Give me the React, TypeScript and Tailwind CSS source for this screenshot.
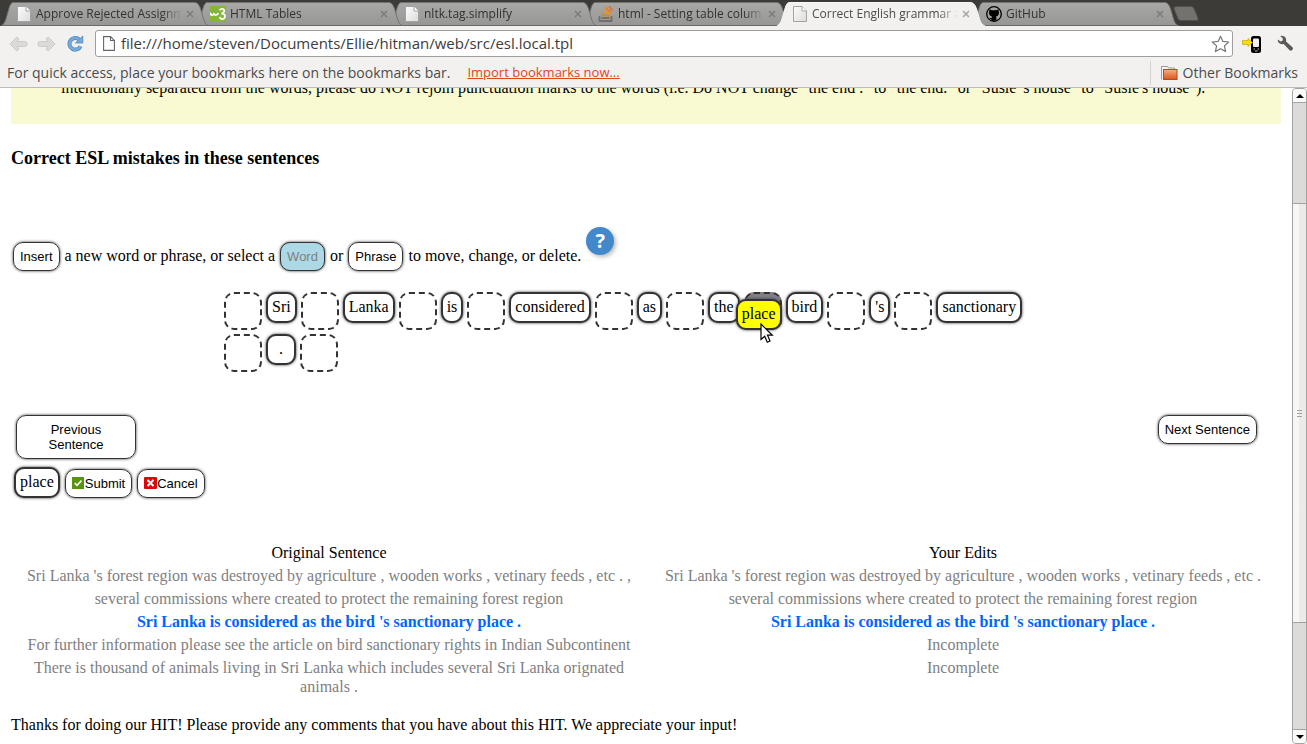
import React from "react";

const chromeFont = "font-['Open_Sans','Noto_Sans',sans-serif]";
const serif = "font-['Liberation_Serif',serif]";

function PageIcon() {
  return (
    <svg width="14" height="16" viewBox="0 0 14 16" className="shrink-0">
      <defs>
        <linearGradient id="paper" x1="0" y1="0" x2="1" y2="1">
          <stop offset="0" stopColor="#fdfdfd" />
          <stop offset="1" stopColor="#dcdcdc" />
        </linearGradient>
      </defs>
      <path d="M.5.5H9L13.500 5V15.500H.5Z" fill="url(#paper)" stroke="#a3a3a1" />
      <path d="M9 .5V5H13.500" fill="#fff" stroke="#a3a3a1" />
    </svg>
  );
}

function OmniboxPageIcon() {
  return (
    <svg width="12" height="15" viewBox="0 0 12 15" className="shrink-0">
      <path d="M.6.6H7.500L11.400 4.500V14.400H.6Z" fill="#fff" stroke="#666" strokeWidth="1.100" />
      <path d="M7.500.6V4.500H11.400" fill="none" stroke="#666" strokeWidth="1.100" />
    </svg>
  );
}

function W3Icon() {
  return (
    <svg width="16" height="16" viewBox="0 0 16 16" className="shrink-0">
      <rect width="16" height="16" fill="#86b53b" />
      <path d="M0 6.500Q.8 9.300 2.500 9Q4 8.800 4 7Q4.200 9.300 6 9Q7.800 8.800 8.200 7" fill="none" stroke="#fff" strokeWidth="1.700" />
      <path d="M9.500 4.200Q11 2.500 13 3Q15 4 13.800 6Q13 7.200 11.500 7.500Q15 7.600 15 10.300Q14.500 13.500 11.500 13Q10 12.500 9.700 11" fill="none" stroke="#fff" strokeWidth="1.800" />
    </svg>
  );
}

function StackIcon() {
  return (
    <svg width="16" height="16" viewBox="0 0 16 16" className="shrink-0" fill="none">
      <path d="M1.500 10V15H13.500V10" stroke="#6f6f6d" strokeWidth="1.800" />
      <path d="M3.500 12H11.500" stroke="#7a6a52" strokeWidth="1.800" />
      <path d="M3.700 8.600L11.500 10.200" stroke="#c98a2d" strokeWidth="1.800" />
      <path d="M4.800 4.800L12 8.300" stroke="#ee9418" strokeWidth="1.800" />
      <path d="M7.300 1.500L13 6.500" stroke="#ef7f1f" strokeWidth="1.800" />
      <path d="M11 0L14.300 4.500" stroke="#e9692c" strokeWidth="1.600" />
    </svg>
  );
}

function GitHubIcon() {
  return (
    <svg width="16" height="16" viewBox="0 0 16 16" className="shrink-0">
      <circle cx="8" cy="8" r="7.300" fill="#a3a3a1" stroke="#000" strokeWidth="1.300" />
      <path d="M3.500 3.200L5.800 4.200H10.200L12.500 3.200L12.900 5.700Q13.400 9.800 10 10.600Q10.500 11.200 10.500 14.800H5.600V13.500Q3.800 13.500 3 11.500Q4.500 12.500 5.700 12Q5.700 11 6 10.600Q2.600 9.800 3.100 5.700Z" fill="#000" />
    </svg>
  );
}

type TabInfo = { title: string; icon: React.ReactNode; active?: boolean; layer: string };

const tabs: TabInfo[] = [
  { title: "Approve Rejected Assignm", icon: <PageIcon />, layer: "z-[5]" },
  { title: "HTML Tables", icon: <W3Icon />, layer: "z-[4]" },
  { title: "nltk.tag.simplify", icon: <PageIcon />, layer: "z-[3]" },
  { title: "html - Setting table colum", icon: <StackIcon />, layer: "z-[2]" },
  { title: "Correct English grammar a", icon: <PageIcon />, active: true, layer: "z-[6]" },
  { title: "GitHub", icon: <GitHubIcon />, layer: "z-[1]" },
];

function Tab({ title, icon, active, layer }: TabInfo) {
  return (
    <div className={`relative flex h-6 min-w-0 basis-[194px] items-center pl-[13px] ${layer}`}>
      <svg
        viewBox="0 0 208 24"
        preserveAspectRatio="none"
        className="pointer-events-none absolute -left-[2px] top-0 h-6 w-[208px]"
        aria-hidden="true"
      >
        <defs>
          <linearGradient id="tabfill" x1="0" y1="0" x2="0" y2="1">
            <stop offset="0" stopColor="#a8a8a6" />
            <stop offset="1" stopColor="#969694" />
          </linearGradient>
        </defs>
        <path
          d="M0 24C4 22 5 17 7 10C9 3 9.500.5 13 .5H193C197 .5 198.500 3 200.500 10C203 18 203 22 208 24Z"
          fill={active ? "#f2f1f0" : "url(#tabfill)"}
        />
        <path
          d="M0 24C4 22 5 17 7 10C9 3 9.500.5 13 .5H193C197 .5 198.500 3 200.500 10C203 18 203 22 208 24"
          fill="none"
          stroke={active ? "#f8f8f7" : "#72726f"}
        />
        {!active && <path d="M0 23.500H208" stroke="#6b6b68" />}
      </svg>
      <button className="relative flex min-w-0 flex-1 items-center gap-1 text-left">
        <span className="flex w-4 shrink-0 justify-center">{icon}</span>
        <span
          className={`block flex-1 overflow-hidden whitespace-nowrap text-[12px] leading-[18px] ${
            active ? "text-[#4c4c4c]" : "text-[#33322e]"
          } [mask-image:linear-gradient(to_right,#000_calc(100%-20px),transparent)]`}
        >
          {title}
        </span>
      </button>
      <button aria-label="Close tab" className="relative ml-[4px] mr-[3px] shrink-0">
        <svg width="8" height="8" viewBox="0 0 8 8">
          <path d="M1 1L7 7M7 1L1 7" stroke={active ? "#a5a5a3" : "#7c7c7a"} strokeWidth="1.500" />
        </svg>
      </button>
    </div>
  );
}

function ArrowIcon({ flip }: { flip?: boolean }) {
  return (
    <svg width="19" height="16" viewBox="0 0 19 16" className={flip ? "-scale-x-100" : ""}>
      <path
        d="M8 1L1 8L8 15L10 13L8 10.500H16.500Q18 10.500 18 8Q18 5.500 16.500 5.500H8L10 3Z"
        fill="#dbdad9"
        stroke="#cccbca"
        strokeLinejoin="round"
      />
    </svg>
  );
}

function ReloadIcon() {
  return (
    <svg width="17" height="17" viewBox="0 0 17 17">
      <path d="M13.500 11.300A5.800 5.800 0 1 1 12.200 4.500" fill="none" stroke="#5087bd" strokeWidth="4" />
      <path d="M13.500 11.300A5.800 5.800 0 1 1 12.200 4.500" fill="none" stroke="#76a9dc" strokeWidth="2.600" />
      <path d="M15.800 1V8H8.500Z" fill="#76a9dc" stroke="#5087bd" strokeWidth=".8" />
    </svg>
  );
}

function TopBar() {
  return (
    <header className={`shrink-0 border-b border-[#bcbbbb] bg-[#f2f1f0] ${chromeFont}`}>
      <div className="flex h-[26px] items-start bg-[#3c3b37] pl-[3px] pt-[2px]">
        {tabs.map((t) => (
          <Tab key={t.title} {...t} />
        ))}
        <button aria-label="New tab" className="ml-[6px] mt-[4px]">
          <svg width="26" height="15" viewBox="0 0 26 15">
            <path d="M3 .5H18Q20 .5 21 2.500L25 12Q25.500 14.500 24 14.500H8Q6 14.500 5 12.500L1 3Q.5.5 3 .5Z" fill="#73726f" stroke="#52514d" />
          </svg>
        </button>
      </div>

      <div className="flex h-[35px] items-center pl-[9px] pr-[13px]">
        <button aria-label="Back"><ArrowIcon /></button>
        <button aria-label="Forward" className="ml-[9px]"><ArrowIcon flip /></button>
        <button aria-label="Reload" className="ml-[11px]"><ReloadIcon /></button>
        <div className="ml-[11px] flex h-[27px] flex-1 items-center rounded-[3px] border border-[#9f9e9c] bg-white pl-[7px] pr-[2px]">
          <OmniboxPageIcon />
          <input
            aria-label="Address"
            defaultValue="file:///home/steven/Documents/Ellie/hitman/web/src/esl.local.tpl"
            className="ml-[6px] h-5 min-w-0 flex-1 bg-transparent text-[15px] text-[#3c3c3c] outline-none"
          />
          <button aria-label="Bookmark this page">
            <svg width="19" height="18" viewBox="0 0 19 18">
              <path d="M9.500 1.200L11.900 6.400L17.700 7L13.400 10.900L14.600 16.600L9.500 13.700L4.400 16.600L5.600 10.900L1.300 7L7.100 6.400Z" fill="#fff" stroke="#777" strokeWidth="1.200" strokeLinejoin="round" />
            </svg>
          </button>
        </div>
        <button aria-label="Send to phone" className="ml-[9px]">
          <svg width="20" height="18" viewBox="0 0 20 18">
            <rect x="9" y="1" width="10" height="17" rx="2.500" fill="#000" />
            <rect x="11" y="3.500" width="6" height="8.500" rx="1" fill="#f2f1f0" />
            <path d="M11.500 14H13M15.500 14H17M13 16H15.500" stroke="#ccc" />
            <path d="M.5 5.500H6V3.500L10.500 7.500L6 11.500V9.500H.5Z" fill="#fbdc05" stroke="#c3a908" strokeWidth=".7" />
          </svg>
        </button>
        <button aria-label="Settings" className="ml-[15px]">
          <svg width="17" height="17" viewBox="0 0 17 17">
            <path d="M3.200 1Q6.500 0 8.500 2.500Q9.500 4.500 9 6.500L15.500 12.200Q16.500 13.500 15.500 14.800Q14 16.200 12.600 15.300L6.700 9Q3.500 9.800 1.500 7.500Q.5 6 .8 4.500L3.600 6.400L5.800 5.500L5.700 3.200Z" fill="#5a5a5a" />
          </svg>
        </button>
      </div>

      <div className="flex h-[26px] items-center pl-[7px] pr-[9px] text-[14px] leading-5 text-[#4c4c4c]">
        <span className="mb-[3px]">For quick access, place your bookmarks here on the bookmarks bar.</span>
        <a href="#import" className="mb-[4px] ml-[17px] text-[13px] text-[#dd4814] underline">Import bookmarks now...</a>
        <button className="mb-[2px] ml-auto flex h-6 items-center gap-[5px] border-l border-[#d5d4d3] pl-[10px]">
          <svg width="17" height="16" viewBox="0 0 17 16">
            <defs>
              <linearGradient id="folder" x1="0" y1="0" x2="0" y2="1">
                <stop offset="0" stopColor="#f4b184" />
                <stop offset="1" stopColor="#dc541b" />
              </linearGradient>
            </defs>
            <path d="M.5 14.500V1.500H6.500L7.500 3H13.500V6" fill="#f7f7f6" stroke="#999" />
            <rect x="2.500" y="4.500" width="13.500" height="10" fill="url(#folder)" stroke="#b9481a" />
          </svg>
          <span>Other Bookmarks</span>
        </button>
      </div>
    </header>
  );
}

function ActionButton({ children, className = "" }: { children: React.ReactNode; className?: string }) {
  return (
    <button
      className={`rounded-[10px] border border-[#333] px-[6px] py-[6px] font-['Liberation_Sans',sans-serif] text-[13px] leading-[15px] shadow-[0_0_3px_#333] ${className}`}
    >
      {children}
    </button>
  );
}

function WordTile({ children, className = "bg-white" }: { children: React.ReactNode; className?: string }) {
  return (
    <button className={`rounded-[10px] border-2 border-[#333] px-1 pb-[5px] pt-[3px] text-center leading-[19px] shadow-[0_0_3px_#333] ${className}`}>
      {children}
    </button>
  );
}

function Slot({ children, className = "" }: { children?: React.ReactNode; className?: string }) {
  return <div className={`size-[38px] rounded-[10px] border-2 border-dashed border-[#333] ${className}`}>{children}</div>;
}

function DraggedTile() {
  return (
    <div className="absolute -bottom-[2px] -right-[2px] z-10">
      <WordTile className="bg-[#ff0]">place</WordTile>
      <svg width="14" height="21" viewBox="0 0 14 21" className="absolute left-6 top-6">
        <path d="M1 1V16.500L4.700 13.200L7.300 19.200L10 18L7.500 12.200H12.300Z" fill="#fff" stroke="#000" strokeWidth="1.200" />
      </svg>
    </div>
  );
}

const rows = [
  {
    original: "Sri Lanka 's forest region was destroyed by agriculture , wooden works , vetinary feeds , etc . ,",
    edit: "Sri Lanka 's forest region was destroyed by agriculture , wooden works , vetinary feeds , etc .",
  },
  {
    original: "several commissions where created to protect the remaining forest region",
    edit: "several commissions where created to protect the remaining forest region",
  },
  {
    original: "Sri Lanka is considered as the bird 's sanctionary place .",
    edit: "Sri Lanka is considered as the bird 's sanctionary place .",
    current: true,
  },
  {
    original: "For further information please see the article on bird sanctionary rights in Indian Subcontinent",
    edit: "Incomplete",
  },
  {
    original: "There is thousand of animals living in Sri Lanka which includes several Sri Lanka orignated animals .",
    edit: "Incomplete",
  },
];

function Scrollbar() {
  return (
    <div aria-hidden="true" className="flex w-[15px] shrink-0 flex-col rounded-[4px] border border-[#a3a2a0] bg-[#dcdbda]">
      <div className="flex h-[14px] items-center justify-center rounded-t-[3px] border-b border-[#a3a2a0] bg-[#fbfbfa]">
        <svg width="8" height="4" viewBox="0 0 8 4"><path d="M0 4L4 0L8 4Z" /></svg>
      </div>
      <div className="basis-[100px]" />
      <div className="flex flex-1 flex-col items-center justify-center gap-[2px] border-y border-[#a3a2a0] bg-linear-to-r from-[#f8f7f6] from-50% to-[#ecebea] to-50%">
        <span className="h-px w-[5px] bg-[#a3a2a0]" />
        <span className="h-px w-[5px] bg-[#a3a2a0]" />
        <span className="h-px w-[5px] bg-[#a3a2a0]" />
      </div>
      <div className="basis-[106px]" />
      <div className="flex h-[14px] items-center justify-center rounded-b-[3px] border-t border-[#a3a2a0] bg-[#fbfbfa]">
        <svg width="8" height="4" viewBox="0 0 8 4"><path d="M0 0L4 4L8 0Z" /></svg>
      </div>
    </div>
  );
}

export default function App() {
  return (
    <div className="flex h-screen flex-col overflow-hidden bg-white">
      <TopBar />
      <div className="flex min-h-0 flex-1">
        <main className={`min-w-0 flex-1 overflow-hidden px-[11px] text-[16px] leading-[19px] text-black ${serif}`}>
          <div className="-mt-[10px] bg-[#f9f9d2] pb-[27px] pl-[50px]">
            intentionally separated from the words, please do NOT rejoin punctuation marks to the words (i.e. Do NOT change
            "the end ." to "the end." or "Susie 's house" to "Susie's house").
          </div>

          <h3 className="mt-[23px] text-[18px] font-bold leading-[22px]">Correct ESL mistakes in these sentences</h3>

          <div className="mt-[73px] flex items-center gap-[5px] pl-[2px]">
            <ActionButton>Insert</ActionButton>
            <span className="pb-[2px]">a new word or phrase, or select a</span>
            <ActionButton className="bg-[#add8e6] text-[#808080]">Word</ActionButton>
            <span className="pb-[2px]">or</span>
            <ActionButton>Phrase</ActionButton>
            <span className="pb-[2px]">to move, change, or delete.</span>
            <button
              aria-label="Help"
              className="-mt-[15px] flex size-7 items-center justify-center self-start rounded-full bg-[#4488cc] font-['Open_Sans',sans-serif] text-[20px] font-bold leading-7 text-white shadow-[2px_2px_4px_#bbb]"
            >
              ?
            </button>
          </div>

          <div className="ml-[213px] mt-[21px] flex w-[64%] flex-wrap items-start gap-1">
            <Slot />
            <WordTile>Sri</WordTile>
            <Slot />
            <WordTile>Lanka</WordTile>
            <Slot />
            <WordTile>is</WordTile>
            <Slot />
            <WordTile>considered</WordTile>
            <Slot />
            <WordTile>as</WordTile>
            <Slot />
            <WordTile>the</WordTile>
            <Slot className="relative bg-[#808080]">
              <DraggedTile />
            </Slot>
            <WordTile>bird</WordTile>
            <Slot />
            <WordTile>'s</WordTile>
            <Slot />
            <WordTile>sanctionary</WordTile>
            <Slot />
            <WordTile className="w-[30px] bg-white">.</WordTile>
            <Slot />
          </div>

          <div className="mt-[43px] flex items-start justify-between pl-[5px] pr-6">
            <ActionButton className="w-[120px]">
              Previous
              <br />
              Sentence
            </ActionButton>
            <ActionButton>Next Sentence</ActionButton>
          </div>

          <div className="mt-[8px] flex items-end gap-[5px] pl-[3px]">
            <WordTile>place</WordTile>
            <ActionButton className="flex items-center">
              <svg width="13" height="13" viewBox="0 0 13 13">
                <rect width="12" height="12" fill="#58940f" />
                <path d="M2.800 6L5 8.300L9.500 3.700" fill="none" stroke="#fff" strokeWidth="1.700" />
              </svg>
              Submit
            </ActionButton>
            <ActionButton className="flex items-center">
              <svg width="13" height="13" viewBox="0 0 13 13">
                <rect width="13" height="12" rx="1" fill="#dc0808" />
                <path d="M3.500 3L9.500 9M9.500 3L3.500 9" stroke="#fff" strokeWidth="2" />
              </svg>
              Cancel
            </ActionButton>
          </div>

          <table className="mt-[42px] w-full table-fixed border-separate border-spacing-[2px] text-center text-[#808080]">
            <thead>
              <tr className="text-black">
                <th className="p-px font-normal">Original Sentence</th>
                <th className="p-px font-normal">Your Edits</th>
              </tr>
            </thead>
            <tbody>
              {rows.map((r) => (
                <tr key={r.original} className={r.current ? "font-bold text-[#0066ff]" : ""}>
                  <td className="p-px align-top">{r.original}</td>
                  <td className="p-px align-top">{r.edit}</td>
                </tr>
              ))}
            </tbody>
          </table>

          <p className="mt-4">
            Thanks for doing our HIT! Please provide any comments that you have about this HIT. We appreciate your input!
          </p>
        </main>
        <Scrollbar />
      </div>
    </div>
  );
}
